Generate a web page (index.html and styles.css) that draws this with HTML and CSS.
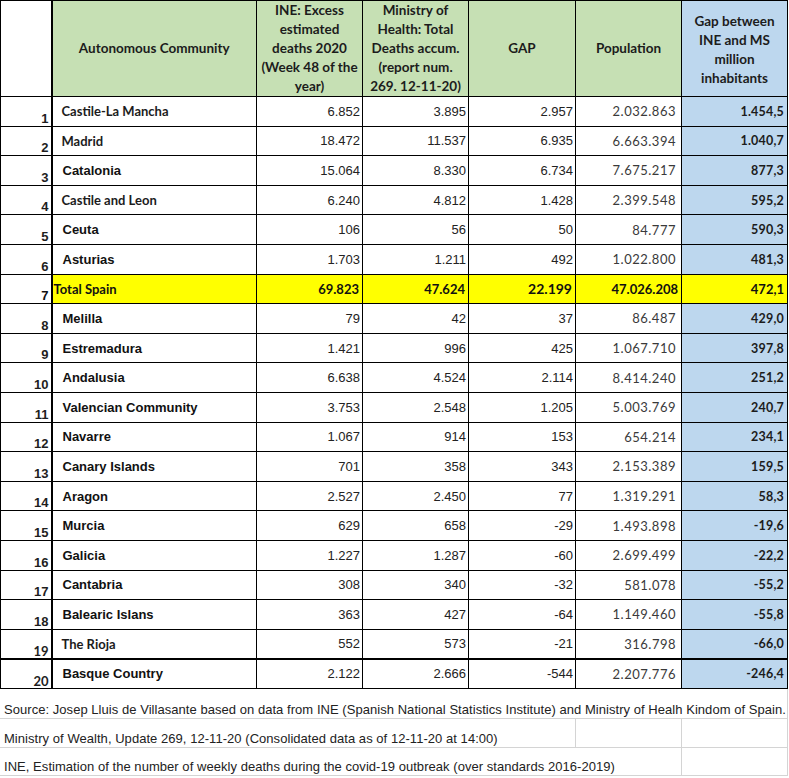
FILE: index.html
```html
<!DOCTYPE html>
<html>
<head>
<meta charset="utf-8">
<link rel="stylesheet" href="styles.css">
</head>
<body>
<table class="sheet">
  <colgroup>
    <col class="c-num"><col class="c-name"><col class="c-val"><col class="c-val"><col class="c-gap"><col class="c-val"><col class="c-val">
  </colgroup>
  <thead>
    <tr class="head">
      <th class="blank"></th>
      <th class="green first">Autonomous Community</th>
      <th class="green">INE: Excess<br>estimated<br>deaths 2020<br>(Week 48 of the<br>year)</th>
      <th class="green">Ministry of<br>Health: Total<br>Deaths accum.<br>(report num.<br>269. 12-11-20)</th>
      <th class="green">GAP</th>
      <th class="green">Population</th>
      <th class="blue">Gap between<br>INE and MS<br>million<br>inhabitants</th>
    </tr>
  </thead>
  <tbody>
    <tr><td class="idx">1</td><td class="name cal first">Castile-La Mancha</td><td class="n">6.852</td><td class="n">3.895</td><td class="n">2.957</td><td class="pop">2.032.863</td><td class="ratio">1.454,5</td></tr>
    <tr><td class="idx">2</td><td class="name cal first">Madrid</td><td class="n">18.472</td><td class="n">11.537</td><td class="n">6.935</td><td class="pop">6.663.394</td><td class="ratio">1.040,7</td></tr>
    <tr><td class="idx">3</td><td class="name first">Catalonia</td><td class="n">15.064</td><td class="n">8.330</td><td class="n">6.734</td><td class="pop">7.675.217</td><td class="ratio">877,3</td></tr>
    <tr><td class="idx">4</td><td class="name cal first">Castile and Leon</td><td class="n">6.240</td><td class="n">4.812</td><td class="n">1.428</td><td class="pop">2.399.548</td><td class="ratio">595,2</td></tr>
    <tr><td class="idx">5</td><td class="name first">Ceuta</td><td class="n">106</td><td class="n">56</td><td class="n">50</td><td class="pop">84.777</td><td class="ratio">590,3</td></tr>
    <tr><td class="idx">6</td><td class="name first">Asturias</td><td class="n">1.703</td><td class="n">1.211</td><td class="n">492</td><td class="pop">1.022.800</td><td class="ratio">481,3</td></tr>
    <tr class="total"><td class="idx">7</td><td class="tname first">Total Spain</td><td class="tn">69.823</td><td class="tn">47.624</td><td class="tn big">22.199</td><td class="tn">47.026.208</td><td class="tn">472,1</td></tr>
    <tr><td class="idx">8</td><td class="name first">Melilla</td><td class="n">79</td><td class="n">42</td><td class="n">37</td><td class="pop">86.487</td><td class="ratio">429,0</td></tr>
    <tr><td class="idx">9</td><td class="name first">Estremadura</td><td class="n">1.421</td><td class="n">996</td><td class="n">425</td><td class="pop">1.067.710</td><td class="ratio">397,8</td></tr>
    <tr><td class="idx">10</td><td class="name first">Andalusia</td><td class="n">6.638</td><td class="n">4.524</td><td class="n">2.114</td><td class="pop">8.414.240</td><td class="ratio">251,2</td></tr>
    <tr><td class="idx">11</td><td class="name first">Valencian Community</td><td class="n">3.753</td><td class="n">2.548</td><td class="n">1.205</td><td class="pop">5.003.769</td><td class="ratio">240,7</td></tr>
    <tr><td class="idx">12</td><td class="name first">Navarre</td><td class="n">1.067</td><td class="n">914</td><td class="n">153</td><td class="pop">654.214</td><td class="ratio">234,1</td></tr>
    <tr><td class="idx">13</td><td class="name first">Canary Islands</td><td class="n">701</td><td class="n">358</td><td class="n">343</td><td class="pop">2.153.389</td><td class="ratio">159,5</td></tr>
    <tr><td class="idx">14</td><td class="name first">Aragon</td><td class="n">2.527</td><td class="n">2.450</td><td class="n">77</td><td class="pop">1.319.291</td><td class="ratio">58,3</td></tr>
    <tr><td class="idx">15</td><td class="name first">Murcia</td><td class="n">629</td><td class="n">658</td><td class="n">-29</td><td class="pop">1.493.898</td><td class="ratio">-19,6</td></tr>
    <tr><td class="idx">16</td><td class="name first">Galicia</td><td class="n">1.227</td><td class="n">1.287</td><td class="n">-60</td><td class="pop">2.699.499</td><td class="ratio">-22,2</td></tr>
    <tr><td class="idx">17</td><td class="name first">Cantabria</td><td class="n">308</td><td class="n">340</td><td class="n">-32</td><td class="pop">581.078</td><td class="ratio">-55,2</td></tr>
    <tr><td class="idx">18</td><td class="name first">Balearic Islans</td><td class="n">363</td><td class="n">427</td><td class="n">-64</td><td class="pop">1.149.460</td><td class="ratio">-55,8</td></tr>
    <tr class="thick-bottom"><td class="idx cal-idx">19</td><td class="name cal first">The Rioja</td><td class="n">552</td><td class="n">573</td><td class="n">-21</td><td class="pop">316.798</td><td class="ratio">-66,0</td></tr>
    <tr><td class="idx cal-idx">20</td><td class="name first">Basque Country</td><td class="n">2.122</td><td class="n">2.666</td><td class="n">-544</td><td class="pop">2.207.776</td><td class="ratio">-246,4</td></tr>
  </tbody>
</table>
<table class="notes">
  <colgroup>
    <col class="c-num"><col class="c-name"><col class="c-val"><col class="c-val"><col class="c-gap"><col class="c-val"><col class="c-val">
  </colgroup>
  <tr><td colspan="7" class="note">Source: Josep Lluis de Villasante based on data from INE (Spanish National Statistics Institute) and Ministry of Healh Kindom of Spain.</td></tr>
  <tr><td colspan="5" class="note">Ministry of Wealth, Update 269, 12-11-20 (Consolidated data as of 12-11-20 at 14:00)</td><td></td><td></td></tr>
  <tr><td colspan="6" class="note">INE, Estimation of the number of weekly deaths during the covid-19 outbreak (over standards 2016-2019)</td><td></td></tr>
</table>
</body>
</html>
```

FILE: styles.css
```css
html, body {
  margin: 0;
  padding: 0;
  background: #ffffff;
}

.c-num { width: 51px; }
.c-name { width: 205px; }
.c-val { width: 106px; }
.c-gap { width: 107px; }

.sheet {
  border-collapse: collapse;
  table-layout: fixed;
  width: 787px;
  font-family: "Liberation Sans", Arial, sans-serif;
  font-size: 13px;
  color: #1e1e1e;
}

.sheet th,
.sheet td {
  border: 1px solid #000;
  padding: 0 3px;
  overflow: hidden;
  white-space: nowrap;
}

.head {
  height: 96px;
}

.head th {
  font-family: Lato, "Open Sans", sans-serif;
  font-weight: 700;
  font-size: 13.5px;
  line-height: 19px;
  text-align: center;
  vertical-align: middle;
  padding: 0;
  color: #1c1c1c;
}

.head .blank {
  background: #fff;
}

.head .blue {
  padding-top: 3px;
}

.green {
  background: #c6e0b4;
}

.blue {
  background: #bdd7ee;
}

.first {
  border-left: 2px solid #000 !important;
}

.sheet tbody tr {
  height: 29.6px;
}

.idx {
  text-align: right;
  vertical-align: bottom;
  font-weight: 700;
  font-size: 13px;
  padding: 0 2px 0 0 !important;
  line-height: 14px;
}

.cal-idx {
  font-family: Lato, sans-serif;
}

.name {
  font-weight: 700;
  text-align: left;
  vertical-align: middle;
  padding-left: 10px !important;
  color: #111;
}

.name.cal {
  font-family: Lato, sans-serif;
  font-size: 13px;
  padding-left: 9px !important;
  color: #1c1c1c;
}

.n {
  text-align: right;
  vertical-align: middle;
  padding-right: 2px !important;
  color: #222;
}

.pop {
  font-family: Lato, sans-serif;
  font-size: 13px;
  letter-spacing: 0.5px;
  text-align: right;
  padding-right: 5px !important;
  color: #3a3a3a;
}

.ratio {
  background: #bdd7ee;
  font-family: Lato, sans-serif;
  font-weight: 700;
  font-size: 12.5px;
  letter-spacing: 0.2px;
  text-align: right;
  padding-right: 3px !important;
  color: #1c1c1c;
}

.total td {
  font-family: Lato, sans-serif;
  font-weight: 700;
  color: #111;
}

.total .tname,
.total .tn {
  background: #ffff00;
}

.tname {
  text-align: left;
  padding-left: 1px !important;
  font-size: 13px;
}

.tn {
  text-align: right;
  font-size: 13px;
  padding-right: 3px !important;
}

.tn.big {
  font-size: 14px;
}

.total .idx {
  font-family: "Liberation Sans", Arial, sans-serif;
}

.thick-bottom td {
  border-bottom: 2px solid #000;
}

.notes {
  border-collapse: collapse;
  table-layout: fixed;
  width: 787px;
  font-family: "Liberation Sans", Arial, sans-serif;
  font-size: 13px;
  color: #222;
}

.notes tr {
  height: 29.5px;
}

.notes td {
  border-right: 1px solid #d4d4d4;
  border-bottom: 1px solid #d4d4d4;
  padding: 0 0 1px 4px;
  vertical-align: bottom;
  white-space: nowrap;
  overflow: visible;
}

.note {
  letter-spacing: 0.045px;
}

.notes tr:last-child {
  height: 28px;
}
```
